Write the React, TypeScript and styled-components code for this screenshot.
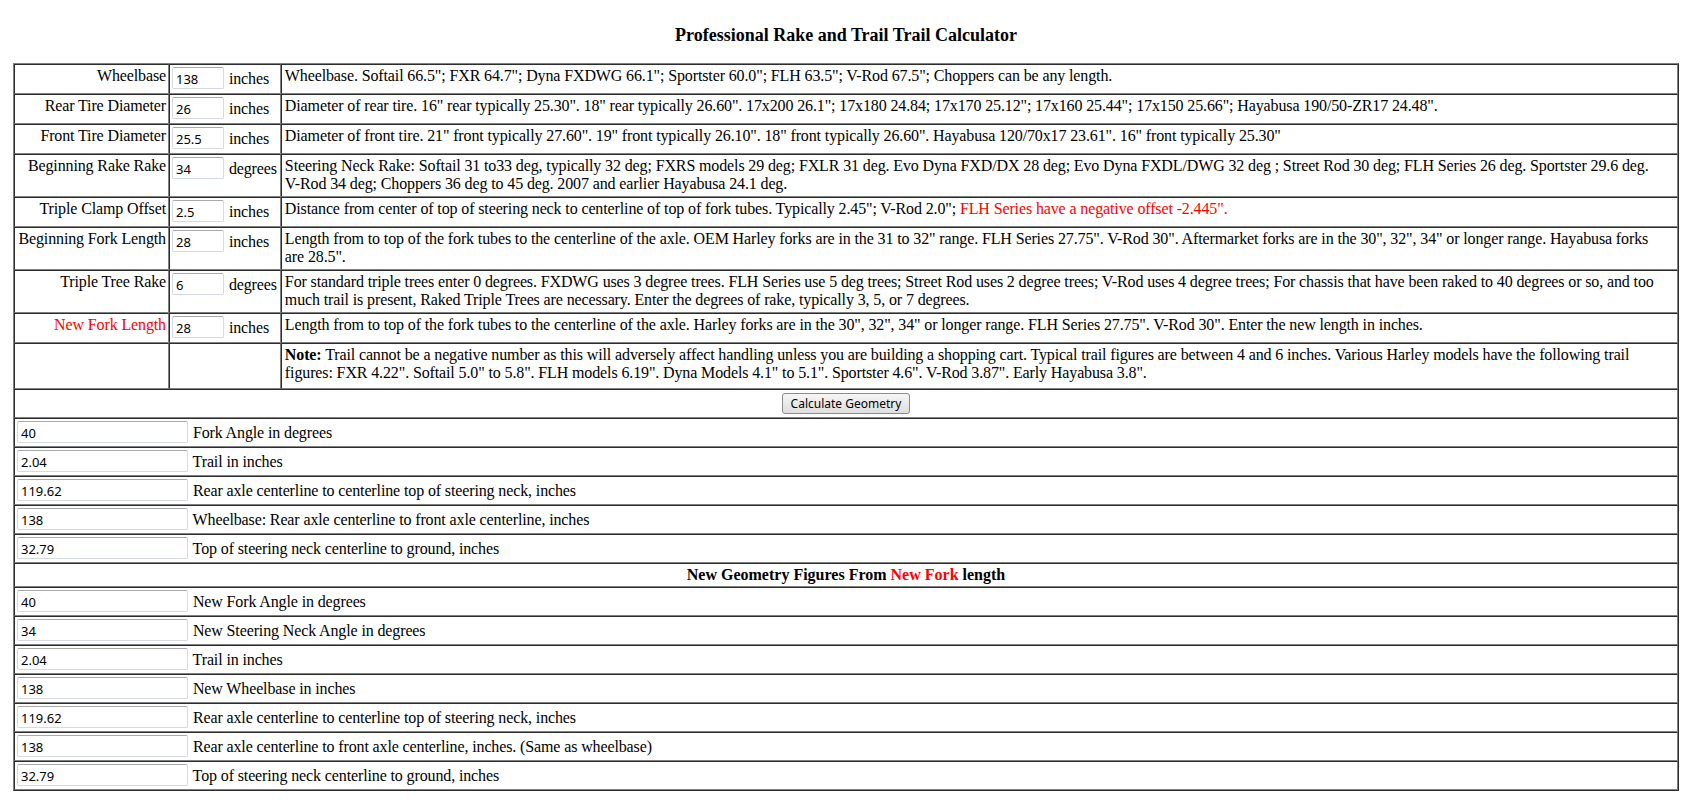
import React from "react";
import styled, { createGlobalStyle } from "styled-components";

const GlobalStyle = createGlobalStyle`
  html, body {
    margin: 0;
    padding: 0;
    background: #fff;
  }
  body {
    font-family: "Liberation Serif", "Times New Roman", serif;
    font-size: 16px;
    color: #000;
  }
`;

interface CellProps {
  red?: boolean;
  align?: "left" | "right" | "center";
}

const Page = styled.div`
  padding: 0 11px 40px 13px;
`;

const Title = styled.div`
  font-weight: 700;
  font-size: 18px;
  text-align: center;
  line-height: 20px;
  padding: 25px 0 18px;
`;

const CalcTable = styled.table`
  width: 100%;
  border: 1px outset grey;
  border-collapse: separate;
  border-spacing: 0;
  font-size: 16px;
  letter-spacing: -0.125px;
`;

const Row = styled.tr`
  vertical-align: top;
`;

const Cell = styled.td<CellProps>`
  border: 1px inset grey;
  padding: 2px 3px 3px;
  vertical-align: top;
  text-align: ${(p) => p.align || "left"};
  color: ${(p) => (p.red ? "#ff0000" : "#000")};
`;

const LabelCell = styled(Cell)`
  width: 148px;
  padding-right: 2px;
  white-space: nowrap;
`;

const InputCell = styled(Cell)`
  width: 101px;
  padding-left: 2px;
  padding-bottom: 4px;
  white-space: nowrap;
`;

const NoteCell = styled(Cell)`
  padding-bottom: 6px;
`;

const ResultCell = styled(Cell)`
  padding: 2px 2px 3px;
`;

const HeaderCell = styled(Cell)`
  font-weight: 700;
  text-align: center;
  letter-spacing: 0;
  padding: 2px 2px 2px;
`;

const ButtonCell = styled(Cell)`
  text-align: center;
  padding: 3px 2px 3px;
`;

const Field = styled.input<{ w: number; h: number }>`
  width: ${(p) => p.w}px;
  height: ${(p) => p.h}px;
  box-sizing: border-box;
  margin: 0 1px 0 0;
  padding: 1px 3px 0;
  border: 1px solid #d5d9e0;
  border-top-color: #a9a9a9;
  border-radius: 2px;
  font-family: "Noto Sans", "DejaVu Sans", sans-serif;
  font-size: 13px;
  letter-spacing: 0;
  color: #000;
  background: #fff;
  outline: none;
`;

const Red = styled.span`
  color: #ff0000;
`;

const NoWrap = styled.span`
  white-space: nowrap;
`;

const CalcButton = styled.button`
  height: 21px;
  padding: 0 8px;
  font-family: "Noto Sans", "DejaVu Sans", sans-serif;
  font-size: 12px;
  letter-spacing: 0;
  color: #000;
  border: 1px solid #8c8c8c;
  border-radius: 3px;
  background: linear-gradient(#f6f6f6, #dedede);
  cursor: pointer;
`;

interface InputRow {
  label: string;
  value: string;
  unit: string;
  desc: React.ReactNode;
  red?: boolean;
}

const inputRows: InputRow[] = [
  {
    label: "Wheelbase",
    value: "138",
    unit: "inches",
    desc: 'Wheelbase. Softail 66.5"; FXR 64.7"; Dyna FXDWG 66.1"; Sportster 60.0"; FLH 63.5"; V-Rod 67.5"; Choppers can be any length.',
  },
  {
    label: "Rear Tire Diameter",
    value: "26",
    unit: "inches",
    desc: 'Diameter of rear tire. 16" rear typically 25.30". 18" rear typically 26.60". 17x200 26.1"; 17x180 24.84; 17x170 25.12"; 17x160 25.44"; 17x150 25.66"; Hayabusa 190/50-ZR17 24.48".',
  },
  {
    label: "Front Tire Diameter",
    value: "25.5",
    unit: "inches",
    desc: 'Diameter of front tire. 21" front typically 27.60". 19" front typically 26.10". 18" front typically 26.60". Hayabusa 120/70x17 23.61". 16" front typically 25.30"',
  },
  {
    label: "Beginning Rake Rake",
    value: "34",
    unit: "degrees",
    desc: (
      <>
        Steering Neck Rake: Softail 31 to33 deg, typically 32 deg; FXRS models 29 deg; FXLR 31 deg. Evo Dyna FXD/DX 28
        deg; Evo Dyna FXDL/DWG 32 deg ; Street Rod 30 deg; FLH Series 26 deg. Sportster 29.6 deg. <NoWrap>V-Rod</NoWrap>{" "}
        34 deg; Choppers 36 deg to 45 deg. 2007 and earlier Hayabusa 24.1 deg.
      </>
    ),
  },
  {
    label: "Triple Clamp Offset",
    value: "2.5",
    unit: "inches",
    desc: (
      <>
        Distance from center of top of steering neck to centerline of top of fork tubes. Typically 2.45"; V-Rod 2.0";{" "}
        <Red>FLH Series have a negative offset -2.445".</Red>
      </>
    ),
  },
  {
    label: "Beginning Fork Length",
    value: "28",
    unit: "inches",
    desc: (
      <>
        Length from to top of the fork tubes to the centerline of the axle. OEM Harley forks are in the 31 to 32"
        range. FLH Series 27.75". V-Rod 30". Aftermarket forks are in the 30", 32", 34" or longer range. Hayabusa forks{" "}
        <NoWrap>are 28.5".</NoWrap>
      </>
    ),
  },
  {
    label: "Triple Tree Rake",
    value: "6",
    unit: "degrees",
    desc: "For standard triple trees enter 0 degrees. FXDWG uses 3 degree trees. FLH Series use 5 deg trees; Street Rod uses 2 degree trees; V-Rod uses 4 degree trees; For chassis that have been raked to 40 degrees or so, and too much trail is present, Raked Triple Trees are necessary. Enter the degrees of rake, typically 3, 5, or 7 degrees.",
  },
  {
    label: "New Fork Length",
    value: "28",
    unit: "inches",
    red: true,
    desc: 'Length from to top of the fork tubes to the centerline of the axle. Harley forks are in the 30", 32", 34" or longer range. FLH Series 27.75". V-Rod 30". Enter the new length in inches.',
  },
];

const results: [string, string][] = [
  ["40", "Fork Angle in degrees"],
  ["2.04", "Trail in inches"],
  ["119.62", "Rear axle centerline to centerline top of steering neck, inches"],
  ["138", "Wheelbase: Rear axle centerline to front axle centerline, inches"],
  ["32.79", "Top of steering neck centerline to ground, inches"],
];

const newResults: [string, string][] = [
  ["40", "New Fork Angle in degrees"],
  ["34", "New Steering Neck Angle in degrees"],
  ["2.04", "Trail in inches"],
  ["138", "New Wheelbase in inches"],
  ["119.62", "Rear axle centerline to centerline top of steering neck, inches"],
  ["138", "Rear axle centerline to front axle centerline, inches. (Same as wheelbase)"],
  ["32.79", "Top of steering neck centerline to ground, inches"],
];

const ResultRow = ({ value, text }: { value: string; text: string }) => (
  <Row>
    <ResultCell colSpan={3}>
      <Field w={171} h={22} defaultValue={value} /> {text}
    </ResultCell>
  </Row>
);

export default function App() {
  return (
    <Page>
      <GlobalStyle />
      <Title>Professional Rake and Trail Trail Calculator</Title>
      <CalcTable>
        <tbody>
          {inputRows.map((r) => (
            <Row key={r.label}>
              <LabelCell align="right" red={r.red}>
                {r.label}
              </LabelCell>
              <InputCell>
                <Field w={52} h={22} defaultValue={r.value} /> {r.unit}
              </InputCell>
              <Cell>{r.desc}</Cell>
            </Row>
          ))}
          <Row>
            <LabelCell />
            <InputCell />
            <NoteCell>
              <b>Note:</b> Trail cannot be a negative number as this will adversely affect handling unless you are
              building a shopping cart. Typical trail figures are between 4 and 6 inches. Various Harley models have
              the following trail figures: FXR 4.22". Softail 5.0" to 5.8". FLH models 6.19". Dyna Models 4.1" to
              5.1". Sportster 4.6". V-Rod 3.87". Early Hayabusa 3.8".
            </NoteCell>
          </Row>
          <Row>
            <ButtonCell colSpan={3}>
              <CalcButton type="button">Calculate Geometry</CalcButton>
            </ButtonCell>
          </Row>
          {results.map(([v, t], i) => (
            <ResultRow key={"a" + i} value={v} text={t} />
          ))}
          <Row>
            <HeaderCell colSpan={3}>
              New Geometry Figures From <Red>New Fork</Red> length
            </HeaderCell>
          </Row>
          {newResults.map(([v, t], i) => (
            <ResultRow key={"b" + i} value={v} text={t} />
          ))}
        </tbody>
      </CalcTable>
    </Page>
  );
}
